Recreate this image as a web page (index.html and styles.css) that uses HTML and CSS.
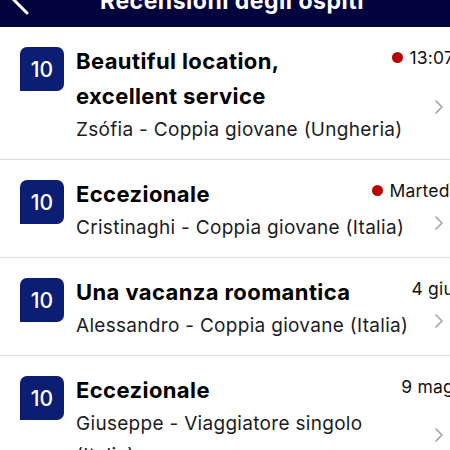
FILE: index.html
```html
<!DOCTYPE html>
<html lang="it">
<head>
<meta charset="utf-8">
<title>Recensioni degli ospiti</title>
<link rel="stylesheet" href="styles.css">
</head>
<body>
<div class="screen">
  <header class="header">
    <div class="back">
      <svg width="30" height="27" viewBox="0 0 30 27"><path d="M27 -14 L13.5 -0.5 L27 13" fill="none" stroke="#fff" stroke-width="3" stroke-linecap="round" stroke-linejoin="round"/></svg>
    </div>
    <h1 class="title">Recensioni degli ospiti</h1>
    <div></div>
  </header>
  <ul class="list">
    <li class="review">
      <div class="badge">10</div>
      <div class="content">
        <div class="top">
          <div class="heading">Beautiful location, excellent service</div>
          <div class="date"><span class="dot"></span>13:07</div>
        </div>
        <div class="sub">Zsófia - Coppia giovane (Ungheria)</div>
      </div>
      <div class="chev"><svg width="8" height="14" viewBox="0 0 8 14"><path d="M1 1 L7 7 L1 13" fill="none" stroke="#a3a3a3" stroke-width="1.6" stroke-linecap="round" stroke-linejoin="round"/></svg></div>
    </li>
    <li class="review">
      <div class="badge">10</div>
      <div class="content">
        <div class="top">
          <div class="heading">Eccezionale</div>
          <div class="date"><span class="dot"></span>Martedì</div>
        </div>
        <div class="sub">Cristinaghi - Coppia giovane (Italia)</div>
      </div>
      <div class="chev"><svg width="8" height="14" viewBox="0 0 8 14"><path d="M1 1 L7 7 L1 13" fill="none" stroke="#a3a3a3" stroke-width="1.6" stroke-linecap="round" stroke-linejoin="round"/></svg></div>
    </li>
    <li class="review">
      <div class="badge">10</div>
      <div class="content">
        <div class="top">
          <div class="heading">Una vacanza roomantica</div>
          <div class="date">4 giu</div>
        </div>
        <div class="sub">Alessandro - Coppia giovane (Italia)</div>
      </div>
      <div class="chev"><svg width="8" height="14" viewBox="0 0 8 14"><path d="M1 1 L7 7 L1 13" fill="none" stroke="#a3a3a3" stroke-width="1.6" stroke-linecap="round" stroke-linejoin="round"/></svg></div>
    </li>
    <li class="review">
      <div class="badge">10</div>
      <div class="content">
        <div class="top">
          <div class="heading">Eccezionale</div>
          <div class="date">9 mag</div>
        </div>
        <div class="sub">Giuseppe - Viaggiatore singolo (Italia)</div>
      </div>
      <div class="chev"><svg width="8" height="14" viewBox="0 0 8 14"><path d="M1 1 L7 7 L1 13" fill="none" stroke="#a3a3a3" stroke-width="1.6" stroke-linecap="round" stroke-linejoin="round"/></svg></div>
    </li>
  </ul>
</div>
</body>
</html>
```
FILE: styles.css
```css
html, body {
  margin: 0;
  padding: 0;
  width: 450px;
  height: 450px;
  overflow: hidden;
  background: #fff;
}
.screen {
  width: 464px;
  font-family: Inter, "Liberation Sans", sans-serif;
  color: #000;
}
.header {
  height: 27px;
  background: #03033d;
  display: grid;
  grid-template-columns: 1fr auto 1fr;
  overflow: hidden;
}
.back {
  display: flex;
  align-items: flex-start;
}
.back svg {
  display: block;
}
.title {
  margin: -16px 0 0 0;
  font-size: 23px;
  font-weight: 700;
  letter-spacing: 0.5px;
  line-height: 34px;
  color: #fff;
  white-space: nowrap;
}
.list {
  list-style: none;
  margin: 0;
  padding: 0;
}
.review {
  display: flex;
  align-items: flex-start;
  padding: 17px 21px 13px 20px;
  border-bottom: 1px solid #dcdcdc;
}
.badge {
  flex: none;
  width: 44px;
  height: 44px;
  margin-top: 3px;
  margin-right: 12px;
  background: #0b1e73;
  border-radius: 7px 7px 7px 0;
  color: #fff;
  font-size: 21px;
  font-weight: 500;
  display: flex;
  align-items: center;
  justify-content: center;
}
.content {
  flex: 1;
  min-width: 0;
}
.top {
  display: flex;
  align-items: flex-start;
}
.heading {
  flex: 1;
  min-width: 0;
  font-size: 22px;
  font-weight: 700;
  letter-spacing: 0.4px;
  line-height: 35px;
}
.date {
  flex: none;
  margin-left: 12px;
  margin-right: -38px;
  font-size: 17.5px;
  letter-spacing: 0.2px;
  line-height: 27px;
  color: #111;
  display: flex;
  align-items: center;
  white-space: nowrap;
}
.dot {
  width: 11px;
  height: 11px;
  border-radius: 50%;
  background: #bb0000;
  margin-right: 6px;
}
.sub {
  font-size: 19px;
  letter-spacing: 0.3px;
  line-height: 32px;
  color: #1c1c1e;
}
.chev {
  flex: none;
  align-self: center;
  margin-top: 24px;
  margin-left: 19px;
  width: 8px;
  display: flex;
}
.chev svg {
  display: block;
}
```
